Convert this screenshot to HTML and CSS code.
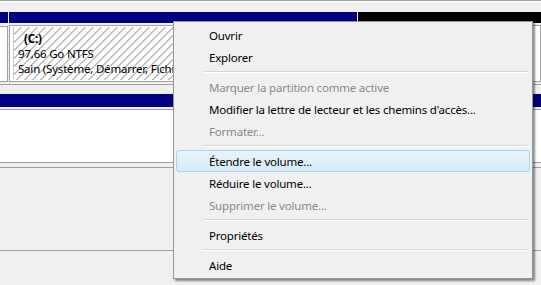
FILE: index.html
```html
<!DOCTYPE html>
<html lang="fr">
<head>
<meta charset="utf-8">
<link rel="stylesheet" href="styles.css">
</head>
<body>
<div class="screen">
  <div class="topline"></div>
  <div class="disk disk1">
    <div class="label-col">
      <div class="hdr navy"></div>
      <div class="lbl-box"></div>
    </div>
    <div class="part part-c">
      <div class="hdr navy"></div>
      <div class="pbox">
        <div class="hatch">
          <div class="pname">(C:)</div>
          <div class="pline">97,66 Go NTFS</div>
          <div class="pline">Sain (Système, Démarrer, Fichier d'échange, Vidage sur incident, Partition principale)</div>
        </div>
      </div>
    </div>
    <div class="part part-u">
      <div class="hdr black"></div>
      <div class="pbox"><div class="plain"></div></div>
    </div>
  </div>
  <div class="rowline"></div>
  <div class="disk disk2">
    <div class="hdr navy tall"></div>
    <div class="box2"></div>
    <div class="rowline2"></div>
  </div>
  <div class="bottomline"></div>
</div>

<div class="menu">
  <div class="item">Ouvrir</div>
  <div class="item">Explorer</div>
  <div class="sep"></div>
  <div class="item disabled">Marquer la partition comme active</div>
  <div class="item">Modifier la lettre de lecteur et les chemins d'accès...</div>
  <div class="item disabled">Formater...</div>
  <div class="sep"></div>
  <div class="item hover">Étendre le volume...</div>
  <div class="item">Réduire le volume...</div>
  <div class="item disabled">Supprimer le volume...</div>
  <div class="sep"></div>
  <div class="item">Propriétés</div>
  <div class="sep"></div>
  <div class="item">Aide</div>
</div>
</body>
</html>
```

FILE: styles.css
```css
html, body {
  margin: 0;
  padding: 0;
}
body {
  width: 541px;
  height: 285px;
  overflow: hidden;
  background: #f0f0f0;
  font-family: "Noto Sans", "Open Sans", sans-serif;
  font-size: 11.5px;
  letter-spacing: -0.2px;
  color: #000;
  position: relative;
}
.screen {
  display: flex;
  flex-direction: column;
}
.topline {
  height: 1px;
  background: #a0a0a0;
  border-bottom: 1px solid #ffffff;
}
.disk1 {
  display: flex;
  margin-top: 10px;
  height: 70px;
}
.hdr {
  height: 11px;
}
.hdr.tall {
  height: 13px;
}
.navy { background: #000080; }
.black { background: #000000; }
.label-col {
  width: 8px;
  display: flex;
  flex-direction: column;
}
.lbl-box {
  margin-top: 3px;
  height: 54px;
  background: #ffffff;
  border-right: 1px solid #a0a0a0;
  border-bottom: 1px solid #a0a0a0;
  border-top: 1px solid #a0a0a0;
}
.part {
  display: flex;
  flex-direction: column;
  margin-left: 1px;
}
.part-c {
  width: 348px;
}
.part-u {
  flex: 1;
  margin-left: 1px;
}
.pbox {
  margin-top: 2px;
  height: 53px;
  border: 1px solid #a0a0a0;
  background: #ffffff;
  padding: 1px 1px 1px 3px;
  display: flex;
}
.hatch {
  flex: 1;
  border-left: 1px solid #c8c8c8;
  background: repeating-linear-gradient(135deg, #ffffff 0 4.6px, #bdbdbd 4.6px 5.66px);
  padding: 4px 0 0 4px;
  line-height: 15px;
  white-space: nowrap;
  overflow: hidden;
}
.pname {
  font-weight: bold;
  padding-left: 6px;
}
.plain {
  flex: 1;
  background: #ffffff;
}
.rowline {
  height: 1px;
  margin-top: 2px;
  background: #a0a0a0;
}
.disk2 {
  margin-top: 9px;
  display: flex;
  flex-direction: column;
}
.box2 {
  margin-top: 2px;
  height: 52px;
  background: #ffffff;
  border-top: 1px solid #a0a0a0;
  border-bottom: 1px solid #a0a0a0;
}
.rowline2 {
  margin-top: 4px;
  height: 1px;
  background: #a0a0a0;
}
.bottomline {
  margin-top: 82px;
  height: 1px;
  background: #a0a0a0;
}

.menu {
  position: absolute;
  left: 173px;
  top: 21px;
  width: 354px;
  padding: 2px;
  background: #f0f0f0;
  border: 1px solid #979797;
  box-shadow: 2px 2px 2px rgba(0, 0, 0, 0.45);
}
.item {
  height: 22px;
  line-height: 22px;
  padding-left: 32px;
  white-space: nowrap;
  border: 1px solid transparent;
  box-sizing: border-box;
  border-radius: 3px;
}
.item.disabled {
  color: #8a8a8a;
}
.item.hover {
  border-color: #aad4ea;
  background: linear-gradient(to bottom, #e8f4fb, #d6ebf6);
}
.sep {
  height: 8px;
  margin-left: 27px;
  margin-right: 2px;
  display: flex;
  flex-direction: column;
  justify-content: center;
}
.sep::before {
  content: "";
  display: block;
  height: 1px;
  background: #d7d7d7;
  border-bottom: 1px solid #ffffff;
}
```
